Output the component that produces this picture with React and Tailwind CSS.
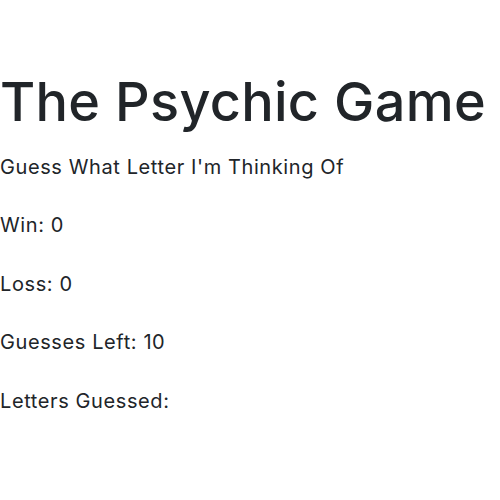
export default function App() {
  const stats = ["Win: 0", "Loss: 0", "Guesses Left: 10", "Letters Guessed:"];

  return (
    <div className="min-h-[500px] bg-white text-[#212529] font-['Inter',sans-serif] pt-[70px]">
      <h1 className="text-[54px] leading-[1.2] font-medium tracking-[0.3px]">The Psychic Game</h1>
      <div className="flex flex-col gap-[28.5px] mt-[17px] text-[20px] leading-[30px] tracking-[0.6px]">
        <p>Guess What Letter I'm Thinking Of</p>
        {stats.map((s) => (
          <p key={s}>{s}</p>
        ))}
      </div>
    </div>
  );
}
